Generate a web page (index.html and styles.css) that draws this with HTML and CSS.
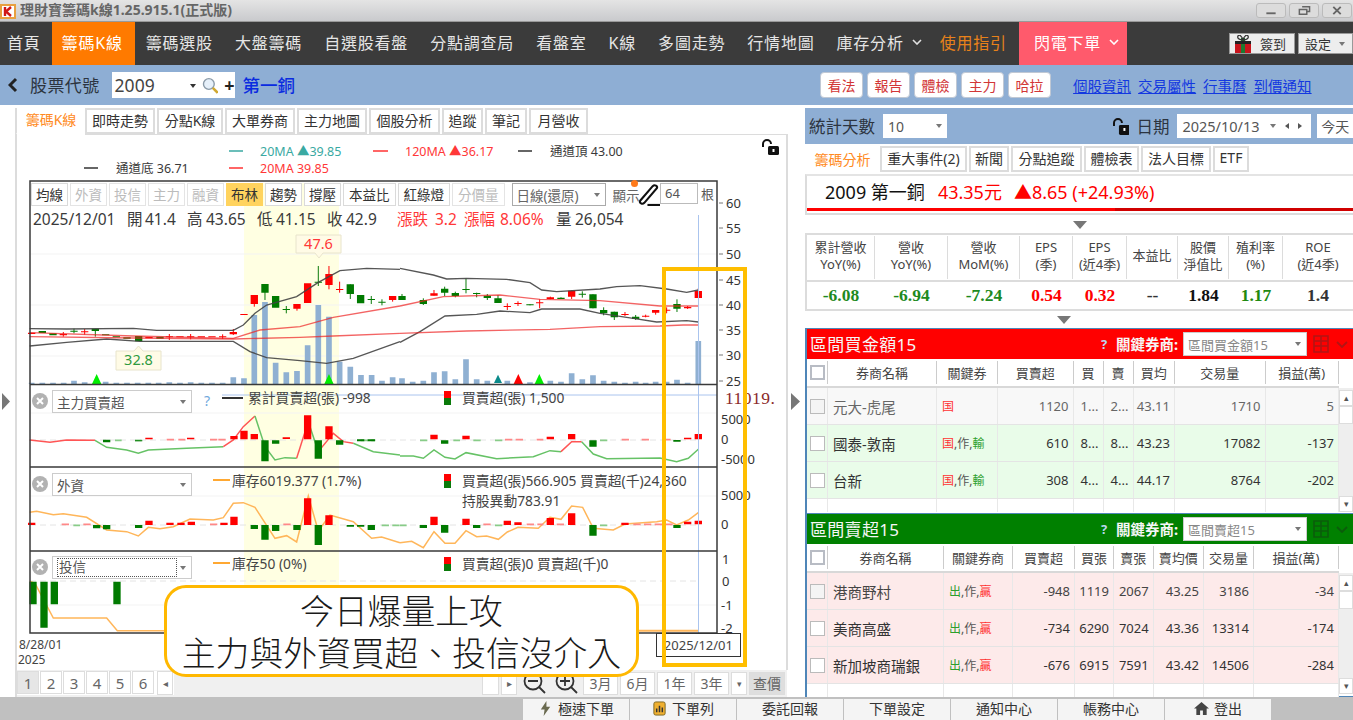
FILE: index.html
```html
<!DOCTYPE html>
<html lang="zh-Hant">
<head>
<meta charset="utf-8">
<title>理財寶籌碼k線</title>
<link rel="stylesheet" href="styles.css">
</head>
<body>
<header class="titlebar">
  <svg class="logo" viewBox="0 0 16 16"><path d="M0 1h16v15H0z" fill="#e8a040"/><path d="M2 3h12v11H2z" fill="#fff"/><path d="M5 4v9M11 4 6 8.500 11 13" fill="none" stroke="#d01818" stroke-width="2.400"/></svg>
  <span class="app-title">理財寶籌碼k線1.25.915.1(正式版)</span>
  <div class="winbtns">
    <span class="winbtn"><svg viewBox="0 0 30 14"><path d="M10 10h10" stroke="#666" stroke-width="2"/></svg></span>
    <span class="winbtn"><svg viewBox="0 0 30 14"><path d="M13 3h8v5h-3M10 6h8v5h-8z" fill="none" stroke="#666" stroke-width="1.600"/></svg></span>
    <span class="winbtn"><svg viewBox="0 0 30 14"><path d="M11 3l8 8M19 3l-8 8" stroke="#666" stroke-width="2"/></svg></span>
  </div>
</header>
<nav class="nav">
  <a class="nav-item first">首頁</a>
  <a class="nav-item active">籌碼K線</a>
  <a class="nav-item">籌碼選股</a>
  <a class="nav-item">大盤籌碼</a>
  <a class="nav-item">自選股看盤</a>
  <a class="nav-item">分點調查局</a>
  <a class="nav-item">看盤室</a>
  <a class="nav-item">K線</a>
  <a class="nav-item">多圖走勢</a>
  <a class="nav-item">行情地圖</a>
  <a class="nav-item">庫存分析<svg class="chev" viewBox="0 0 10 6"><path d="M1 1l4 4 4-4" fill="none" stroke="#e0e0e0" stroke-width="1.600"/></svg></a>
  <a class="nav-item guide">使用指引</a>
  <a class="nav-item flash">閃電下單<svg class="chev" viewBox="0 0 10 6"><path d="M1 1l4 4 4-4" fill="none" stroke="#fff" stroke-width="1.600"/></svg></a>
  <div class="nav-right">
    <button class="checkin"><svg class="gift" viewBox="0 0 16 18"><path d="M0 6h16v12H0z" fill="#c8141c"/><path d="M6 3h4v15H6z" fill="#1c7a30"/><path d="M0 6h16v3H0z" fill="#222"/><path d="M8 5C4 5 2 3 3 1s4 0 5 4c1-4 4-6 5-4s-1 4-5 4z" fill="none" stroke="#333" stroke-width="1.300"/></svg><span>簽到</span></button>
    <button class="setting"><span>設定</span><i class="setting-arrow"></i></button>
  </div>
</nav>
<section class="stockbar">
  <svg class="back" viewBox="0 0 10 16"><path d="M8 2 2 8l6 6" fill="none" stroke="#222" stroke-width="3"/></svg>
  <span class="stock-label">股票代號</span>
  <div class="stock-input">
    <span class="stock-code">2009</span>
    <i class="caret"></i>
    <svg class="search" viewBox="0 0 17 17"><circle cx="7" cy="7" r="5.500" fill="#e6f0fa" stroke="#8a9aa8" stroke-width="1.400"/><path d="M11 11l5 5" stroke="#d0a830" stroke-width="2.600"/></svg>
    <span class="plus">+</span>
  </div>
  <span class="stock-name">第一銅</span>
  <div class="stock-actions">
    <button class="act">看法</button><button class="act">報告</button><button class="act">體檢</button><button class="act">主力</button><button class="act">哈拉</button>
  </div>
  <div class="stock-links"><a>個股資訊</a><a>交易屬性</a><a>行事曆</a><a>到價通知</a></div>
</section>
<main class="main">
  <section class="left">
    <div class="tabs left-tabs">
      <a class="tab on">籌碼K線</a><a class="tab">即時走勢</a><a class="tab">分點K線</a><a class="tab">大單券商</a><a class="tab">主力地圖</a><a class="tab">個股分析</a><a class="tab">追蹤</a><a class="tab">筆記</a><a class="tab">月營收</a>
    </div>
    <div class="chart">
      <svg class="plot" viewBox="0 134 800 536">
        <path class="frame-side" d="M16 134V670M787 134V670"/>
        <path class="frame-top" d="M85 134H787"/>
        <rect x="244" y="183" width="95" height="450" fill="#ffffe2"/>
        <path class="grid" d="M30 254H717M30 305H717M30 356H717M30 413H717M30 496H717M30 605H717"/>
        <path class="zero" d="M30 581H700M30 440H700M30 525H700"/>
        <g transform="translate(0,230) scale(.3333)">
          <path class="vol" d="M95 462V458M127 462V458M159 462V458M191 462V458M222 462V452M254 462V457M317 462V455M349 462V458M381 462V458M413 462V458M445 462V458M476 462V458M508 462V457M540 462V458M572 462V457M604 462V458M636 462V458M668 462V458M700 462V442M732 462V445M763 462V255M795 462V216M827 462V398M859 462V427M891 462V423M923 462V346M955 462V225M987 462V260M1019 462V395M1051 462V410M1083 462V435M1115 462V435M1146 462V452M1178 462V442"/>
          <path class="wr" d="M190 306V320M254 297V314M508 312V330M572 312V328M668 313V327M700 297V315M763 195V230M891 222V242M987 108V178M1019 155V188M1178 198V215"/>
          <path class="br" d="M95 308V312M190 312V316M254 304V307M447 321V325M508 319V322M540 319V322M572 319V322M604 319V322M636 319V322M668 319V322M700 306V313M732 252V255M763 195V222M891 222V236M923 160V219M987 132V165M1019 177V180M1178 198V210"/>
          <path class="wg" d="M222 296V310M286 298V320M795 162V210M859 228V250M955 108V168M1051 163V207M1114 198V222M1146 208V226"/>
          <path class="bg" d="M127 303V309M159 310V316M222 302V305M286 296V303M317 313V316M349 319V322M381 322V326M416 318V334M480 320V326M795 162V188M827 198V233M859 237V240M955 155V158M1051 163V192M1082 195V220M1114 207V210M1146 215V218"/>
          <path class="bb" d="M89 296L200 297 400 295 470 301 700 301 730 285 765 250 800 225 890 200 955 157 1020 122 1100 115 1200 118"/>
          <path class="bb" d="M89 348L200 337 320 327 420 334 700 334 750 365 800 383 900 392 980 400 1060 385 1200 335"/>
          <path class="ma" d="M89 308L400 318 700 325 780 300 900 290 1000 262 1200 228"/>
          <path class="ma" d="M89 320L400 324 700 327 900 322 1000 318 1200 310"/>
          <path class="lime" d="M276 462L290 432 304 462ZM973 462L987 432 1001 462Z"/>
          <path class="bline-r" d="M89 630L150 637 200 630 285 631"/>
          <path class="bline-g" d="M285 631L320 652 380 660 415 670 445 660 560 655 670 650"/>
          <path class="bline-r" d="M670 650L700 630 730 590 765 558"/>
          <path class="bline-g" d="M765 558L795 650 825 690 855 683 890 685"/>
          <path class="bline-r" d="M890 685L925 575"/>
          <path class="bline-g" d="M925 575L955 665"/>
          <path class="bline-r" d="M955 665L1000 610 1030 635 1060 640"/>
          <path class="bline-g" d="M1060 640L1120 665 1200 675"/>
          <path class="pk" d="M500 629H525M535 629H556M630 629H652M655 629H680"/>
          <path class="pg" d="M345 631H365M405 631H425M1082 631H1126"/>
          <path class="br" d="M447 623V628M572 623V628M702 618V628M732 602V628M763 612V628M859 622V627M923 556V628M987 589V628"/>
          <path class="bg" d="M320 629V637M416 631V634M795 631V694M827 631V641M955 631V686M1019 631V644M1082 628V634M1114 628V634"/>
        </g>
        <g transform="translate(400,230) scale(.3333)">
          <path class="vol" d="M6 462V445M38 462V455M70 462V452M102 462V427M134 462V424M166 462V448M198 462V388M230 462V448M262 462V452M322 462V452M390 462V457M451 462V452M483 462V455M515 462V430M547 462V448M579 462V436M611 462V452M643 462V455M675 462V458M707 462V455M737 462V458M767 462V455M800 462V455M831 462V449M863 462V458M895 462V333"/>
          <path class="wr" d="M102 180V197M322 220V240M354 214V228M419 208V235M451 200V208M515 182V207M675 246V258M737 254V262M767 240V254M800 232V250M863 228V237M895 175V204"/>
          <path class="br" d="M102 190V197M322 228V231M354 219V222M419 217V220M451 202V207M515 182V200M675 252V255M737 257V260M767 240V248M800 239V242M863 231V235M895 183V204"/>
          <path class="wg" d="M6 192V210M70 205V225M134 170V198M166 185V202M198 145V190M230 188V202M262 192V210M294 195V219M390 223V226M483 202V207M547 184V203M579 193V235M611 232V256M643 245V270M707 255V270M831 208V246"/>
          <path class="bg" d="M6 198V210M70 210V222M134 176V188M166 189V198M198 177V180M230 189V192M262 197V204M294 205V219M390 223V226M483 203V207M547 191V194M579 193V235M611 240V250M643 245V262M707 260V267M831 222V236"/>
          <path class="bb" d="M0 115L100 135 140 147 200 145 320 148 390 158 425 180 470 185 600 177 650 170 720 167 800 177 860 187 895 180"/>
          <path class="bb" d="M0 337L60 305 135 258 230 253 300 243 390 248 425 237 540 237 600 250 700 265 770 276 860 272 895 276"/>
          <path class="ma" d="M0 228L130 200 300 195 420 208 600 212 780 228 895 228"/>
          <path class="ma" d="M0 310L200 303 450 298 600 290 780 288 850 285 895 285"/>
          <path class="tealtri" d="M282 459L294 434 306 459Z"/>
          <path class="redtri" d="M341 462L355 432 369 462Z"/>
          <path class="lime" d="M404 462L418 432 432 462Z"/>
          <path class="bline-g" d="M0 678L40 678 70 685 102 660 135 682 165 687 198 668 290 686 400 680 450 662 483 665"/>
          <path class="bline-r" d="M483 665L515 635 545 635"/>
          <path class="bline-g" d="M545 635L580 672 620 686 780 684 830 695 865 685 895 658"/>
          <path class="pk" d="M315 629H370M410 629H430M665 629H690M725 629H750M790 629H812"/>
          <path class="pg" d="M60 631H85M160 631H180M220 631H245M285 631H308M600 631H624"/>
          <path class="br" d="M102 614V628M198 617V628M451 620V628M515 612V628M863 623V628M895 612V628"/>
          <path class="bg" d="M134 631V641M579 631V650M831 630V635"/>
        </g>
        <g transform="translate(0,470) scale(.3333)">
          <path class="line-o" d="M89 127L110 124 160 134 190 131 260 142 320 180 380 185 415 198 445 172 480 176 520 170 570 147 640 150 670 143 700 100 730 98 765 112 825 205 860 197 890 216 925 78 955 183 990 135 1060 155 1115 205 1145 201 1200 218"/>
          <path class="pk" d="M185 163H208M250 163H272M630 163H652M850 163H872"/>
          <path class="pg" d="M220 166H240M1145 166H1200"/>
          <path class="br" d="M95 158V165M447 152V165M510 158V165M543 158V165M574 155V165M672 158V165M702 140V165M923 85V165M987 136V165"/>
          <path class="bg" d="M290 165V175M320 165V178M416 165V174M763 165V177M795 165V209M827 165V183M891 165V180M955 165V225M1051 165V170M1082 165V170M1114 165V180"/>
          <path class="line-o" d="M89 334L105 340 160 444 320 444 352 482 500 482"/>
          <path class="bg" d="M99 335V403M132 335V473M163 335V403M351 335V403"/>
        </g>
        <g transform="translate(400,470) scale(.3333)">
          <path class="line-o" d="M0 218L35 214 70 233 102 185 135 220 165 220 198 182 230 200 260 198 295 208 322 186 354 172 415 175 450 142 483 148 515 108 548 112 580 175 640 180 675 162 770 155 800 150 830 165 865 150 895 128"/>
          <path class="pk" d="M250 163H275M380 163H430M470 163H495M700 163H820"/>
          <path class="pg" d="M0 166H20M285 166H308M600 166H625"/>
          <path class="br" d="M102 140V165M198 146V165M322 152V165M354 157V165M451 144V165M515 130V165M675 158V165M863 155V163M895 152V163"/>
          <path class="bg" d="M70 165V174M134 165V188M230 165V174M579 165V197M831 165V174"/>
          <path class="line-o thick" d="M310 482H895"/>
        </g>
        <path class="cross" d="M698.500 215V633M222 395H717"/>
        <path class="frame" d="M30 181H717V633H30ZM30 384.500H717M30 467H717M30 551H717"/>
        <path class="ticks" d="M719 203h4M719 228h4M719 254h4M719 280h4M719 305h4M719 330h4M719 355h4M719 381h4"/>
        <path class="tip" d="M296 235H341V253H323L319 258 315 253H296Z"/>
        <text class="t red mid" x="318.500" y="249">47.6</text>
        <path class="tip" d="M116 351H134L138.500 346 143 351H161V370H116Z"/>
        <text class="t green mid" x="138.500" y="365">32.8</text>

        <g class="legend">
          <path class="dash-teal" d="M229 151h14"/><text class="teal" x="260" y="155.500">20MA ▲39.85</text>
          <path class="dash-red" d="M373 151h15"/><text class="red" x="405" y="155.500">120MA ▲36.17</text>
          <path class="dash-dark" d="M518 151h14"/><text class="dark" x="550" y="155.500">通道頂 43.00</text>
          <path class="dash-dark" d="M84 168h14"/><text class="dark" x="116" y="173">通道底 36.71</text>
          <path class="dash-red" d="M229 168h14"/><text class="red" x="260" y="173">20MA 39.85</text>
        </g>
        <g class="ohlc">
          <text class="dark" y="225"><tspan x="33">2025/12/01</tspan><tspan x="127">開</tspan><tspan x="145">41.4</tspan><tspan x="187">高</tspan><tspan x="206">43.65</tspan><tspan x="257">低</tspan><tspan x="276">41.15</tspan><tspan x="327">收</tspan><tspan x="346">42.9</tspan><tspan class="red" x="397">漲跌</tspan><tspan class="red" x="435">3.2</tspan><tspan class="red" x="464">漲幅</tspan><tspan class="red" x="500">8.06%</tspan><tspan x="556">量</tspan><tspan x="575">26,054</tspan></text>
        </g>
        <g class="ax">
          <text x="726" y="208">60</text><text x="726" y="233">55</text><text x="726" y="259">50</text><text x="726" y="285">45</text><text x="726" y="310">40</text><text x="726" y="335">35</text><text x="726" y="360">30</text><text x="726" y="386">25</text>
          <text x="721" y="424">5000</text><text x="721" y="444">0</text><text x="721" y="464">-5000</text>
          <text x="721" y="500">5000</text><text x="721" y="529">0</text>
          <text x="722" y="564">1</text><text x="722" y="586">0</text><text x="721" y="610">-1</text><text x="721" y="633">-2</text>
        </g>
        <text class="big-val" x="725" y="404">11019.</text>

        <g class="legend dim">
          <path class="dash-dark wide" d="M222 398h21"/><text x="248" y="403">累計買賣超(張) -998</text>
          <text x="462" y="403">買賣超(張) 1,500</text>
          <path class="dash-o" d="M213 480h17"/><text x="232" y="486">庫存6019.377 (1.7%)</text>
          <text x="462" y="486">買賣超(張)566.905 買賣超(千)24,360</text>
          <text x="462" y="506">持股異動783.91</text>
          <path class="dash-o" d="M213 563h17"/><text x="232" y="569">庫存50 (0%)</text>
          <text x="462" y="569">買賣超(張)0 買賣超(千)0</text>
        </g>
        <path class="ico-r" d="M444 391h7v7h-7zM444 474h7v7h-7zM444 557h7v7h-7z"/>
        <path class="ico-g" d="M444 398h7v7h-7zM444 481h7v7h-7zM444 564h7v7h-7z"/>
        <text class="help" x="207" y="406">?</text>
        <g class="closes">
          <circle cx="40" cy="401" r="8"/><circle cx="40" cy="484" r="8"/><circle cx="40" cy="567" r="8"/>
          <path d="M37 398l6 6M43 398l-6 6M37 481l6 6M43 481l-6 6M37 564l6 6M43 564l-6 6"/>
        </g>
        <path class="side-arrow" d="M2 393l8 8.500-8 8.500zM791 393l9 8.500-9 8.500z"/>
        <g class="date-lbl"><text x="19" y="649">8/28/01</text><text x="18" y="664">2025</text></g>
        <g class="lock"><path d="M763 147v-3a4 4 0 0 1 8 0" fill="none" stroke="#111" stroke-width="2"/><rect x="768" y="146" width="11" height="9" rx="1.500" fill="#111"/><rect x="772.500" y="149" width="2" height="3" fill="#fff"/></g>
      </svg>

      <div class="tools">
        <button class="tool">均線</button><button class="tool off">外資</button><button class="tool off">投信</button><button class="tool off">主力</button><button class="tool off">融資</button><button class="tool hot">布林</button><button class="tool">趨勢</button><button class="tool">撐壓</button><button class="tool">本益比</button><button class="tool">紅綠燈</button><button class="tool off">分價量</button>
        <div class="tool-select">日線(還原)<i class="caret small"></i></div>
        <span class="show-lbl">顯示</span>
        <i class="dot"></i>
        <svg class="pen" viewBox="0 0 22 22"><path d="M3 17 15 3c2-2 5 0 4 2L7 19c-2 2-5 0-4-2z" fill="#fff" stroke="#111" stroke-width="2"/><path d="M10 21h12" stroke="#111" stroke-width="2"/></svg>
        <span class="count-box">64</span>
        <span class="root-lbl">根</span>
      </div>
      <div class="ind-select main-sel">主力買賣超<i class="caret small"></i></div>
      <div class="ind-select foreign-sel">外資<i class="caret small"></i></div>
      <div class="ind-select trust-sel"><span class="focus">投信</span><i class="caret small"></i></div>
      <div class="date-box">2025/12/01</div>
      <div class="note">今日爆量上攻<br>主力與外資買超、投信沒介入</div>
      <div class="marker"></div>
    </div>
    <div class="pager">
      <div class="pages">
        <button class="pg-btn cur">1</button><button class="pg-btn">2</button><button class="pg-btn">3</button><button class="pg-btn">4</button><button class="pg-btn">5</button><button class="pg-btn">6</button><button class="pg-arrow">◂</button>
      </div>
      <div class="ranges">
        <button class="rg blank"></button><button class="rg arrow">▸</button>
        <svg class="zoomi" viewBox="0 0 26 24"><circle cx="12" cy="10" r="8.500" fill="none" stroke="#333" stroke-width="1.800"/><path d="M7 10h10M18 16l6 6" stroke="#333" stroke-width="1.800"/></svg>
        <svg class="zoomi" viewBox="0 0 26 24"><circle cx="12" cy="10" r="8.500" fill="none" stroke="#333" stroke-width="1.800"/><path d="M7 10h10M12 5v10M18 16l6 6" stroke="#333" stroke-width="1.800"/></svg>
        <button class="rg">3月</button><button class="rg">6月</button><button class="rg">1年</button><button class="rg">3年</button><button class="rg narrow">▾</button><button class="rg query">查價</button>
      </div>
    </div>
  </section>

  <section class="right">
    <div class="stat-bar">
      <span class="stat-label">統計天數</span>
      <div class="mini-select days">10<i class="caret small"></i></div>
      <svg class="lock2" viewBox="0 0 17 17"><path d="M1 8V5a4 4 0 0 1 8 0" fill="none" stroke="#111" stroke-width="2"/><rect x="6" y="7" width="11" height="10" rx="1.500" fill="#111"/><rect x="10.500" y="10" width="2" height="3" fill="#fff"/></svg>
      <span class="date-label">日期</span>
      <div class="mini-select date">2025/10/13<i class="caret small"></i><i class="tri-l"></i><i class="tri-r"></i></div>
      <button class="today">今天</button>
    </div>
    <div class="tabs right-tabs">
      <a class="tab on">籌碼分析</a><a class="tab">重大事件(2)</a><a class="tab">新聞</a><a class="tab">分點追蹤</a><a class="tab">體檢表</a><a class="tab">法人目標</a><a class="tab">ETF</a>
    </div>
    <div class="quote">
      <span class="q-name">2009 第一銅</span><span class="q-price">43.35元</span><span class="q-chg">▲8.65 (+24.93%)</span>
    </div>
    <div class="drop d1"><i></i></div>
    <div class="stats">
      <div class="stat-row head">
        <div>累計營收<br>YoY(%)</div><div>營收<br>YoY(%)</div><div>營收<br>MoM(%)</div><div>EPS<br>(季)</div><div>EPS<br>(近4季)</div><div>本益比</div><div>股價<br>淨值比</div><div>殖利率<br>(%)</div><div>ROE<br>(近4季)</div>
      </div>
      <div class="stat-row vals">
        <div class="g">-6.08</div><div class="g">-6.94</div><div class="g">-7.24</div><div class="r">0.54</div><div class="r">0.32</div><div class="k">--</div><div class="b">1.84</div><div class="g2">1.17</div><div class="k">1.4</div>
      </div>
    </div>
    <div class="drop d2"><i></i></div>

    <div class="broker t1">
      <div class="b-head red-head">
        <span class="b-title">區間買金額15</span>
        <span class="b-q">?</span><span class="b-key">關鍵券商:</span>
        <div class="b-select">區間買金額15<i class="caret small"></i></div>
        <svg class="b-grid" viewBox="0 0 16 18"><path d="M1 1h14v16H1zM1 6h14M1 11h14M8 1v16" fill="none" stroke="#b31414" stroke-width="1.600"/></svg>
        <svg class="b-chev" viewBox="0 0 12 7"><path d="M1 1l5 5 5-5" fill="none" stroke="#b31414" stroke-width="1.800"/></svg>
      </div>
      <div class="row colhead"><div><i class="cb grey"></i></div><div>券商名稱</div><div>關鍵券</div><div>買賣超</div><div>買</div><div>賣</div><div>買均</div><div>交易量</div><div>損益(萬)</div></div>
      <div class="b-body">
        <div class="b-rows">
          <div class="row dimrow"><div><i class="cb"></i></div><div class="nm">元大-虎尾</div><div class="ky"><em class="kr">国</em></div><div class="num">1120</div><div class="num">1...</div><div class="num">2...</div><div class="num">43.11</div><div class="num">1710</div><div class="num">5</div></div>
          <div class="row buyrow"><div><i class="cb"></i></div><div class="nm">國泰-敦南</div><div class="ky"><em class="kr">国</em>,作,<em class="kg">輸</em></div><div class="num">610</div><div class="num">8...</div><div class="num">8...</div><div class="num">43.23</div><div class="num">17082</div><div class="num">-137</div></div>
          <div class="row buyrow"><div><i class="cb"></i></div><div class="nm">台新</div><div class="ky"><em class="kr">国</em>,作,<em class="kg">輸</em></div><div class="num">308</div><div class="num">4...</div><div class="num">4...</div><div class="num">44.17</div><div class="num">8764</div><div class="num">-202</div></div>
          <div class="row emptyrow"><div></div><div></div><div></div><div></div><div></div><div></div><div></div><div></div><div></div></div>
        </div>
        <div class="sb"><button class="sb-btn">▴</button><i class="sb-thumb"></i><i class="sb-track"></i><button class="sb-btn">▾</button></div>
      </div>
    </div>

    <div class="broker t2">
      <div class="b-head green-head">
        <span class="b-title">區間賣超15</span>
        <span class="b-q">?</span><span class="b-key">關鍵券商:</span>
        <div class="b-select">區間賣超15<i class="caret small"></i></div>
        <svg class="b-grid" viewBox="0 0 16 18"><path d="M1 1h14v16H1zM1 6h14M1 11h14M8 1v16" fill="none" stroke="#0b5c0b" stroke-width="1.600"/></svg>
        <svg class="b-chev" viewBox="0 0 12 7"><path d="M1 1l5 5 5-5" fill="none" stroke="#0b5c0b" stroke-width="1.800"/></svg>
      </div>
      <div class="row colhead"><div><i class="cb grey"></i></div><div>券商名稱</div><div>關鍵券商</div><div>買賣超</div><div>買張</div><div>賣張</div><div>賣均價</div><div>交易量</div><div>損益(萬)</div></div>
      <div class="b-body">
        <div class="b-rows">
          <div class="row sellrow faded"><div><i class="cb"></i></div><div class="nm">港商野村</div><div class="ky"><em class="kg">出</em>,作,<em class="kr">贏</em></div><div class="num">-948</div><div class="num">1119</div><div class="num">2067</div><div class="num">43.25</div><div class="num">3186</div><div class="num">-34</div></div>
          <div class="row sellrow"><div><i class="cb"></i></div><div class="nm">美商高盛</div><div class="ky"><em class="kg">出</em>,作,<em class="kr">贏</em></div><div class="num">-734</div><div class="num">6290</div><div class="num">7024</div><div class="num">43.36</div><div class="num">13314</div><div class="num">-174</div></div>
          <div class="row sellrow"><div><i class="cb"></i></div><div class="nm">新加坡商瑞銀</div><div class="ky"><em class="kg">出</em>,作,<em class="kr">贏</em></div><div class="num">-676</div><div class="num">6915</div><div class="num">7591</div><div class="num">43.42</div><div class="num">14506</div><div class="num">-284</div></div>
          <div class="row emptyrow"><div></div><div></div><div></div><div></div><div></div><div></div><div></div><div></div><div></div></div>
        </div>
        <div class="sb"><button class="sb-btn">▴</button><i class="sb-thumb"></i><i class="sb-track"></i><button class="sb-btn">▾</button></div>
      </div>
    </div>
  </section>
</main>
<footer class="footer">
  <a class="f-tab"><svg class="f-ico" viewBox="0 0 12 16"><path d="M7 0 1 9h4l-1 7 7-10H7z" fill="#6a6a50"/></svg>極速下單</a>
  <a class="f-tab"><svg class="f-ico" viewBox="0 0 14 16"><rect x="1" y="1" width="12" height="14" rx="2" fill="#f0b030" stroke="#7a6420"/><path d="M4 12V8M7 12V5M10 12V7" stroke="#333" stroke-width="1.600"/></svg>下單列</a>
  <a class="f-tab">委託回報</a>
  <a class="f-tab">下單設定</a>
  <a class="f-tab">通知中心</a>
  <a class="f-tab">帳務中心</a>
  <a class="f-tab"><svg class="f-ico" viewBox="0 0 16 16"><path d="M8 1 0 8h2.500v7h4v-5h3v5h4V8H16z" fill="#444"/></svg>登出</a>
</footer>
</body>
</html>
```
FILE: styles.css
```css
* { box-sizing: border-box; }
html, body { margin: 0; padding: 0; }
body {
  width: 1353px; height: 720px; overflow: hidden; background: #fff;
  font-family: "Noto Sans", "Noto Sans CJK TC", sans-serif;
  color: #333;
}
button { font-family: inherit; padding: 0; margin: 0; background: #fff; cursor: default; }
em { font-style: normal; }

/* title bar */
.titlebar { height: 22px; display: flex; align-items: center; background: linear-gradient(#e4e4e4, #c9cacd); border-bottom: 1px solid #999; }
.logo { width: 16px; height: 16px; flex: none; }
.app-title { margin-left: 4px; font-size: 14px; font-weight: 700; color: #666; white-space: nowrap; line-height: 1; padding-bottom: 2px; }
.winbtns { margin-left: auto; display: flex; gap: 3px; padding-right: 1px; }
.winbtn { width: 30px; height: 15px; border: 1px solid #bbb; border-radius: 3px; background: #dcdcdc; display: block; }
.winbtn svg { display: block; width: 100%; height: 100%; }

/* nav */
.nav { height: 43px; display: flex; align-items: stretch; background: #3b3b3b; }
.nav-item { display: flex; align-items: center; padding: 0 11px 3px; font-size: 16px; letter-spacing: .8px; color: #e6e6e6; white-space: nowrap; }
.nav-item.first { padding-left: 7px; }
.nav-item.active { background: #ff7a00; color: #fff; padding: 0 12px 3px 10px; }
.nav-item.guide { color: #e8821a; padding: 0 12px 3px 7px; }
.nav-item.flash { background: #ff5a6c; color: #fff; padding: 0 8px 3px 15px; }
.chev { width: 10px; height: 6px; margin-left: 8px; flex: none; }
.nav-right { margin-left: auto; display: flex; gap: 3px; align-items: center; }
.checkin { width: 66px; height: 21px; border: 1px solid #999; background: #ededed; display: flex; align-items: center; font-size: 13px; color: #333; padding-left: 5px; gap: 9px; }
.gift { width: 16px; height: 18px; }
.setting { width: 55px; height: 21px; border: 1px solid #999; background: #ededed; display: flex; align-items: center; font-size: 13px; color: #333; padding-left: 6px; position: relative; }
.setting-arrow { position: absolute; right: 7px; top: 8px; border: 3.500px solid transparent; border-top: 4px solid #777; }

/* stock bar */
.stockbar { height: 40px; display: flex; align-items: center; background: #8eaed4; padding-left: 8px; }
.back { width: 10px; height: 16px; flex: none; }
.stock-label { margin-left: 12px; font-size: 17px; letter-spacing: .4px; color: #2c3440; white-space: nowrap; padding-bottom: 2px; }
.stock-input { margin-left: 12px; width: 123px; height: 26px; background: #fff; display: flex; align-items: center; padding-left: 3px; position: relative; }
.stock-code { font-size: 17.500px; color: #444; }
.caret { display: block; border: 3.500px solid transparent; border-top: 4px solid #333; }
.stock-input .caret { margin-left: 35px; margin-top: 4px; }
.search { width: 17px; height: 17px; margin-left: 6px; }
.plus { font-size: 18px; font-weight: 700; margin-left: 6px; color: #222; line-height: 1; }
.stock-name { margin-left: 8px; font-size: 17.500px; font-weight: 500; color: #0a2be0; padding-bottom: 2px; }
.stock-actions { margin-left: 525px; display: flex; gap: 0; }
.act { width: 43px; height: 26px; margin-right: 4px; border: 1px solid #c0c8d4; border-radius: 4px; font-size: 14px; color: #d23636; background: #fff; }
.stock-links { margin-left: 18px; display: flex; gap: 7px; }
.stock-links a { font-size: 14.500px; color: #1338e0; text-decoration: underline; white-space: nowrap; }

/* main */
.main { height: 592px; display: flex; }
.left { width: 805px; flex: none; display: flex; flex-direction: column; }
.tabs { display: flex; }
.tab { display: flex; align-items: center; justify-content: center; border: 2px solid #dcdcdc; background: #fff; font-size: 14px; color: #333; white-space: nowrap; height: 26px; margin-right: 2px; padding-bottom: 3px; }
.tab.on { color: #ff8a22; border-bottom-color: #fff; border-right: 0; }
.left-tabs { height: 29px; padding: 3px 0 0 15px; }
.left-tabs .tab:nth-child(1) { width: 70px; margin-right: 0; height: 27px; border-top: 0; }
.left-tabs .tab:nth-child(2) { width: 70px; }
.left-tabs .tab:nth-child(3) { width: 66px; }
.left-tabs .tab:nth-child(4) { width: 70px; }
.left-tabs .tab:nth-child(5) { width: 70px; }
.left-tabs .tab:nth-child(6) { width: 71px; }
.left-tabs .tab:nth-child(7) { width: 41px; }
.left-tabs .tab:nth-child(8) { width: 42px; }
.left-tabs .tab:nth-child(9) { width: 59px; }

/* chart canvas */
.chart { position: relative; width: 800px; height: 536px; }
.plot { display: block; width: 800px; height: 536px; font-family: "Noto Sans", "Noto Sans CJK TC", sans-serif; }
.frame-side { stroke: #dcdcdc; stroke-width: 2; fill: none; }
.frame-top { stroke: #dcdcdc; stroke-width: 2; fill: none; }
.frame { fill: none; stroke: #3a3a3a; stroke-width: 1.500; }
.grid { stroke: #f3f3f3; stroke-width: 1; fill: none; }
.zero { stroke: #e4e4e4; stroke-width: 1; stroke-dasharray: 6 4; fill: none; }
.vol { stroke: #8fb0d2; stroke-width: 17; fill: none; }
.wr { stroke: #f00; stroke-width: 3; fill: none; }
.wg { stroke: #0a7a0a; stroke-width: 3; fill: none; }
.br { stroke: #f00; stroke-width: 22; fill: none; }
.bg { stroke: #007a00; stroke-width: 22; fill: none; }
.bb { stroke: #444; stroke-width: 4; fill: none; stroke-opacity: .9; }
.ma { stroke: #ee2222; stroke-width: 4; fill: none; stroke-opacity: .7; }
.lime { fill: #00ee00; }
.tealtri { fill: #0a8a8a; }
.redtri { fill: #f00; }
.bline-r { stroke: #f55; stroke-width: 4.500; fill: none; }
.bline-g { stroke: #66c266; stroke-width: 4.500; fill: none; }
.pk { stroke: #ff8888; stroke-width: 5; stroke-dasharray: 22 10; fill: none; }
.pg { stroke: #88cc88; stroke-width: 5; stroke-dasharray: 22 10; fill: none; }
.line-o { stroke: #ffb65a; stroke-width: 4.500; fill: none; }
.line-o.thick { stroke-width: 6; }
.cross { stroke: #aac4ee; stroke-width: 1; fill: none; }
.ticks { stroke: #777; stroke-width: 1; fill: none; }
.tip { fill: #fffbe6; stroke: #e8e4cc; stroke-width: 1; }
.t { font-size: 14.500px; }
.mid { text-anchor: middle; }
text.red, tspan.red { fill: #ff3838; }
text.green { fill: #2f9a3f; }
text.teal { fill: #3aa9a2; }
text.dark { fill: #3a3a3a; }
.legend { font-size: 12.500px; }
.legend.dim { font-size: 13.800px; fill: #444; }
.dash-teal { stroke: #3aa9a2; stroke-width: 1.500; }
.dash-red { stroke: #f33; stroke-width: 1.500; }
.dash-dark { stroke: #333; stroke-width: 1.500; }
.dash-dark.wide { stroke-width: 2; }
.dash-o { stroke: #ffa832; stroke-width: 2; }
.ohlc { font-size: 15.500px; }
.ax { font-size: 13px; fill: #333; }
.big-val { font-size: 17.500px; fill: #8b2a2a; font-family: "Liberation Serif", serif; letter-spacing: .5px; }
.ico-r { fill: #f00; }
.ico-g { fill: #0a7a0a; }
.help { font-size: 14px; fill: #6fa8dc; text-anchor: middle; }
.closes circle { fill: #b2b2b2; }
.closes path { stroke: #fff; stroke-width: 2; }
.side-arrow { fill: #777; }
.date-lbl { font-size: 12px; fill: #444; }

/* chart overlays */
.tools { position: absolute; left: 31px; top: 49px; width: 685px; height: 23px; display: flex; gap: 2px; align-items: stretch; }
.tool { padding: 0 4px 2px; border: 1px solid #dadada; font-size: 13.500px; color: #333; white-space: nowrap; background: #fff; }
.tool:nth-child(n+9) { padding: 0 5px 2px; }
.tool.off { color: #bcbcbc; border-color: #e4e4e4; }
.tool.hot { background: #ffd35e; border-color: #ffd35e; }
.tool-select { margin-left: 5px; width: 94px; border: 1px solid #aaa; font-size: 13.500px; color: #666; display: flex; align-items: center; padding-left: 4px; background: #fff; white-space: nowrap; }
.caret.small { margin-left: auto; margin-right: 5px; border: 3px solid transparent; border-top: 4px solid #777; margin-top: 3px; }
.show-lbl { margin-left: 5px; font-size: 13.500px; color: #666; align-self: center; width: 26px; overflow: hidden; white-space: nowrap; }
.dot { position: absolute; left: 600px; top: -3px; width: 7px; height: 7px; border-radius: 50%; background: #ff7a1a; }
.pen { position: absolute; left: 606px; top: 0; width: 23px; height: 23px; }
.count-box { position: absolute; left: 629px; top: 0; width: 38px; height: 21px; border: 1px solid #bbb; font-size: 13px; color: #555; padding-left: 4px; line-height: 19px; }
.root-lbl { position: absolute; left: 670px; top: 1px; font-size: 13px; color: #555; }
.ind-select { position: absolute; left: 52px; width: 140px; height: 23px; border: 1px solid #ccc; background: #fff; font-size: 13.500px; color: #555; display: flex; align-items: center; padding-left: 4px; }
.main-sel { top: 256px; }
.foreign-sel { top: 339px; }
.trust-sel { top: 422px; }
.focus { width: 120px; border: 1px dotted #555; height: 19px; line-height: 17px; padding-left: 1px; }
.date-box { position: absolute; left: 656px; top: 499px; width: 85px; height: 24px; border: 1px solid #333; background: #fff; font-size: 13px; color: #444; text-align: right; padding-right: 7px; line-height: 22px; }
.note { position: absolute; left: 164px; top: 451px; width: 475px; height: 92px; border: 3px solid #ffb800; border-radius: 22px; background: #fff; text-align: center; font-size: 33.800px; line-height: 42px; color: #1a1a1a; padding-top: 2px; font-weight: 300; white-space: nowrap; }
.marker { position: absolute; left: 662px; top: 133px; width: 85px; height: 400px; border: 4px solid #ffbe00; }

/* pager */
.pager { height: 27px; width: 772px; margin-left: 15px; border-left: 2px solid #dcdcdc; display: flex; justify-content: space-between; background: #f0f0f0; padding-top: 1px; }
.pages { display: flex; gap: 1px; height: 24px; background: #fff; width: 157px; }
.pg-btn { width: 22px; height: 23px; border: 1px solid #ddd; font-size: 15px; color: #666; background: #fff; }
.pg-btn.cur { background: #e6e6e6; }
.pg-arrow { width: 16px; height: 24px; margin-left: 2px; border: 1px solid #ddd; font-size: 10px; color: #666; background: #fff; flex: none; }
.ranges { display: flex; gap: 2px; margin-right: 2px; height: 24px; align-items: center; }
.rg { width: 35px; height: 23px; border: 1px solid #ddd; font-size: 14px; color: #666; background: #fff; }
.rg.blank { width: 17px; }
.rg.arrow { width: 16px; font-size: 10px; }
.rg.narrow { width: 16px; font-size: 9px; }
.rg.query { background: #dedede; width: 36px; }
.zoomi { width: 26px; height: 24px; margin: 0 2px; }

/* right */
.right { width: 548px; flex: none; padding-top: 3px; display: flex; flex-direction: column; }
.stat-bar { height: 36px; background: #8eaed4; display: flex; align-items: center; padding-left: 4px; }
.stat-label { font-size: 16.500px; color: #2c3440; white-space: nowrap; }
.mini-select { background: #fff; height: 24px; display: flex; align-items: center; color: #555; padding-left: 5px; font-size: 14px; }
.mini-select.days { width: 64px; margin-left: 8px; }
.lock2 { width: 17px; height: 17px; margin-left: 166px; }
.date-label { margin-left: 7px; font-size: 16.500px; color: #2c3440; white-space: nowrap; }
.mini-select.date { width: 135px; margin-left: 8px; font-size: 14.500px; }
.mini-select.date .caret.small { margin-left: 10px; margin-right: 0; }
.tri-l, .tri-r { display: block; border: 3px solid transparent; margin-left: 9px; }
.tri-l { border-right: 4px solid #555; border-left: 0; }
.tri-r { border-left: 4px solid #555; border-right: 0; }
.today { margin-left: 6px; width: 36px; height: 24px; border: 0; font-size: 14px; color: #555; }
.right-tabs { height: 30px; padding-top: 2px; }
.right-tabs .tab { height: 26px; margin-right: 2px; }
.right-tabs .tab:nth-child(1) { width: 75px; margin-right: 0; border: 0; height: 28px; }
.right-tabs .tab:nth-child(2) { width: 87px; }
.right-tabs .tab:nth-child(3) { width: 40px; }
.right-tabs .tab:nth-child(4) { width: 71px; }
.right-tabs .tab:nth-child(5) { width: 55px; }
.right-tabs .tab:nth-child(6) { width: 70px; }
.right-tabs .tab:nth-child(7) { width: 36px; }
.quote { height: 41px; border: 2px solid #dcdcdc; border-right: 0; border-top: 2px solid #e4e4e4; display: flex; align-items: center; padding: 0 0 8px 18px; font-size: 18px; position: relative; background: linear-gradient(to right, #f00 0, #f00 308px, #d00000 308px) no-repeat 0 32px / 100% 3px; white-space: nowrap; }
.q-name { color: #111; }
.q-price { margin-left: 13px; color: #f00; }
.q-chg { margin-left: 12px; color: #f00; }
.drop { display: flex; justify-content: center; }
.drop i { display: block; border: 7px solid transparent; border-top: 8px solid #777; border-bottom: 0; }
.d1 { height: 18px; padding: 6px 0 0 0; margin-left: 2px; }
.d2 { height: 17px; padding: 5px 14px 0 0; margin-left: -16px; }
.stats { height: 78px; border: 2px solid #dcdcdc; border-right: 0; }
.stat-row { display: grid; grid-template-columns: 68px 73px 72px 53px 54px 51px 51px 54px 1fr; align-items: center; }
.stat-row.head { height: 47px; border-bottom: 2px solid #dcdcdc; font-size: 13px; line-height: 17px; color: #444; text-align: center; }
.stat-row.head > div { border-right: 1px solid #dcdcdc; height: 43px; white-space: nowrap; display: block; padding-top: 3px; }
.stat-row.head > div:nth-child(6) { padding-top: 11px; }
.stat-row.head > div:last-child { border-right: 0; }
.stat-row.vals { height: 27px; font-family: "Liberation Serif", serif; font-weight: 700; font-size: 17.500px; text-align: center; }
.g { color: #1e8a1e; }
.g2 { color: #1f8a10; }
.r { color: #f00; }
.k { color: #333; }
.b { color: #111; }

/* broker tables */
.broker { border-left: 2px solid #4f86b8; border-top: 1px solid #4f86b8; }
.t1 { height: 185px; }
.t2 { height: 184px; border-bottom: 1px solid #4f86b8; }
.b-head { height: 30px; display: flex; align-items: center; color: #f6f6f6; padding-left: 3px; }
.red-head { background: #f00; }
.green-head { background: #008000; }
.b-title { font-size: 17px; width: 291px; white-space: nowrap; letter-spacing: .3px; padding-bottom: 2px; }
.b-q { font-size: 13px; font-weight: 700; color: #bcd8ee; width: 15px; }
.b-key { font-size: 14.500px; font-weight: 700; width: 67px; white-space: nowrap; padding-bottom: 1px; }
.b-select { width: 124px; height: 24px; background: #fff; border: 1px solid #ccc; color: #888; font-size: 13px; display: flex; align-items: center; padding-left: 4px; white-space: nowrap; }
.b-grid { width: 16px; height: 18px; margin-left: 6px; }
.b-chev { width: 12px; height: 7px; margin-left: 7px; }
.row { display: grid; font-size: 13px; color: #333; width: 532px; }
.t1 .row { grid-template-columns: 21px 109px 61px 75.500px 30px 30px 41.500px 90.500px 73.500px; }
.t2 .row { grid-template-columns: 21px 116px 69px 62px 39px 39.700px 50.300px 50px 85px; }
.colhead { height: 29px; background: #fff; border-bottom: 2px solid #d8d8d8; font-size: 13px; color: #444; }
.colhead > div { display: flex; align-items: center; justify-content: center; border-right: 1px solid #ccc; margin: 2px 0; white-space: nowrap; }
.cb { display: block; width: 15px; height: 15px; border: 1px solid #bbb; background: #fff; }
.cb.grey { border: 2px solid #b8bcc4; box-shadow: inset 0 0 0 1px #fff; }
.b-body { display: flex; }
.b-rows { width: 532px; }
.b-rows .row { height: 37px; }
.b-rows .row > div { display: flex; align-items: center; border-right: 1px solid #e8e8e8; white-space: nowrap; }
.b-rows .row > div:first-child { justify-content: center; }
.buyrow, .sellrow { border-bottom: 1px solid #e4e4e4; }
.buyrow { background: #e9fce9; }
.sellrow { background: #fdeaea; }
.dimrow { background: #f8f8f8; color: #666; border-bottom: 1px solid #e4e4e4; }
.dimrow .cb, .faded .cb { background: #f4f4f4; }
.faded { color: #444; }
.b-rows .emptyrow { height: 13px; background: #fff; }
.nm { padding-left: 5px; font-size: 14.500px; }
.ky { padding-left: 5px; font-size: 12px; color: #555; }
.kr { color: #f33; }
.kg { color: #2ca02c; }
.b-rows .row > .num { justify-content: flex-end; padding-right: 4px; }
.sb { width: 15px; display: flex; flex-direction: column; background: #eee; height: 124px; padding-top: 2px; }
.sb-btn { height: 16px; border: 1px solid #ddd; font-size: 9px; line-height: 12px; color: #555; background: #fff; flex: none; }
.sb-thumb { display: block; height: 18px; background: #fff; border: 1px solid #ddd; flex: none; }
.sb-track { display: block; flex: 1; }
.t2 .sb { height: 121px; }

/* footer */
.footer { height: 23px; background: #c0c0c0; display: flex; padding: 2px 0 0 523px; gap: 1px; }
.f-tab { width: 106px; height: 21px; background: #f4f4f4; font-size: 14px; color: #333; display: flex; align-items: center; justify-content: center; gap: 5px; white-space: nowrap; padding-bottom: 3px; }
.f-ico { height: 15px; width: 15px; flex: none; }
```
